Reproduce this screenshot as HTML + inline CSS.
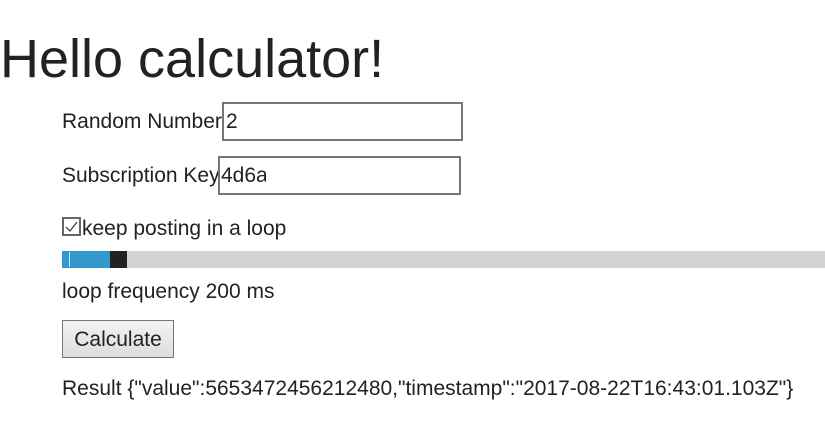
<!DOCTYPE html>
<html><head><style>
body{margin:0;width:825px;height:433px;background:#fff;font-family:"Liberation Sans",sans-serif;color:#222;position:relative;overflow:hidden}
div,span{position:absolute;white-space:nowrap}
.t{font-size:21px;line-height:24px}
.in{border:2px solid #767676;box-sizing:border-box;background:#fff}
</style></head><body>
<div style="left:0;top:28px;font-size:54px;line-height:62px;color:#222">Hello calculator!</div>
<div class="t" style="left:62px;top:110px">Random Number</div>
<div class="in" style="left:222px;top:102px;width:241px;height:39px"></div>
<div class="t" style="left:226px;top:110px">2</div>
<div class="t" style="left:62px;top:164px">Subscription Key</div>
<div class="in" style="left:218px;top:156px;width:243px;height:39px"></div>
<div class="t" style="left:221px;top:164px;width:45px;overflow:hidden">4d6a</div>
<div style="left:62px;top:217px;width:19px;height:19px;border:2px solid #666;box-sizing:border-box"></div>
<svg style="position:absolute;left:62px;top:217px" width="19" height="19"><path d="M4 10 L8 14 L15 5" stroke="#333" stroke-width="1.2" fill="none"/></svg>
<div class="t" style="left:82px;top:217px">keep posting in a loop</div>
<div style="left:62px;top:251px;width:763px;height:17px;background:#d3d3d3"></div>
<div style="left:62px;top:251px;width:48px;height:17px;background:#3399cc"></div>
<div style="left:69px;top:252px;width:1px;height:15px;background:#cfe6f3"></div>
<div style="left:110px;top:251px;width:17px;height:17px;background:#222"></div>
<div class="t" style="left:62px;top:280px">loop frequency 200 ms</div>
<div style="left:62px;top:320px;width:112px;height:38px;border:1px solid #777;box-sizing:border-box;background:linear-gradient(#f3f3f3,#dcdcdc)"></div>
<div class="t" style="left:62px;top:328px;width:112px;text-align:center">Calculate</div>
<div class="t" style="left:62px;top:377px">Result {"value":5653472456212480,"timestamp":"2017-08-22T16:43:01.103Z"}</div>
</body></html>
